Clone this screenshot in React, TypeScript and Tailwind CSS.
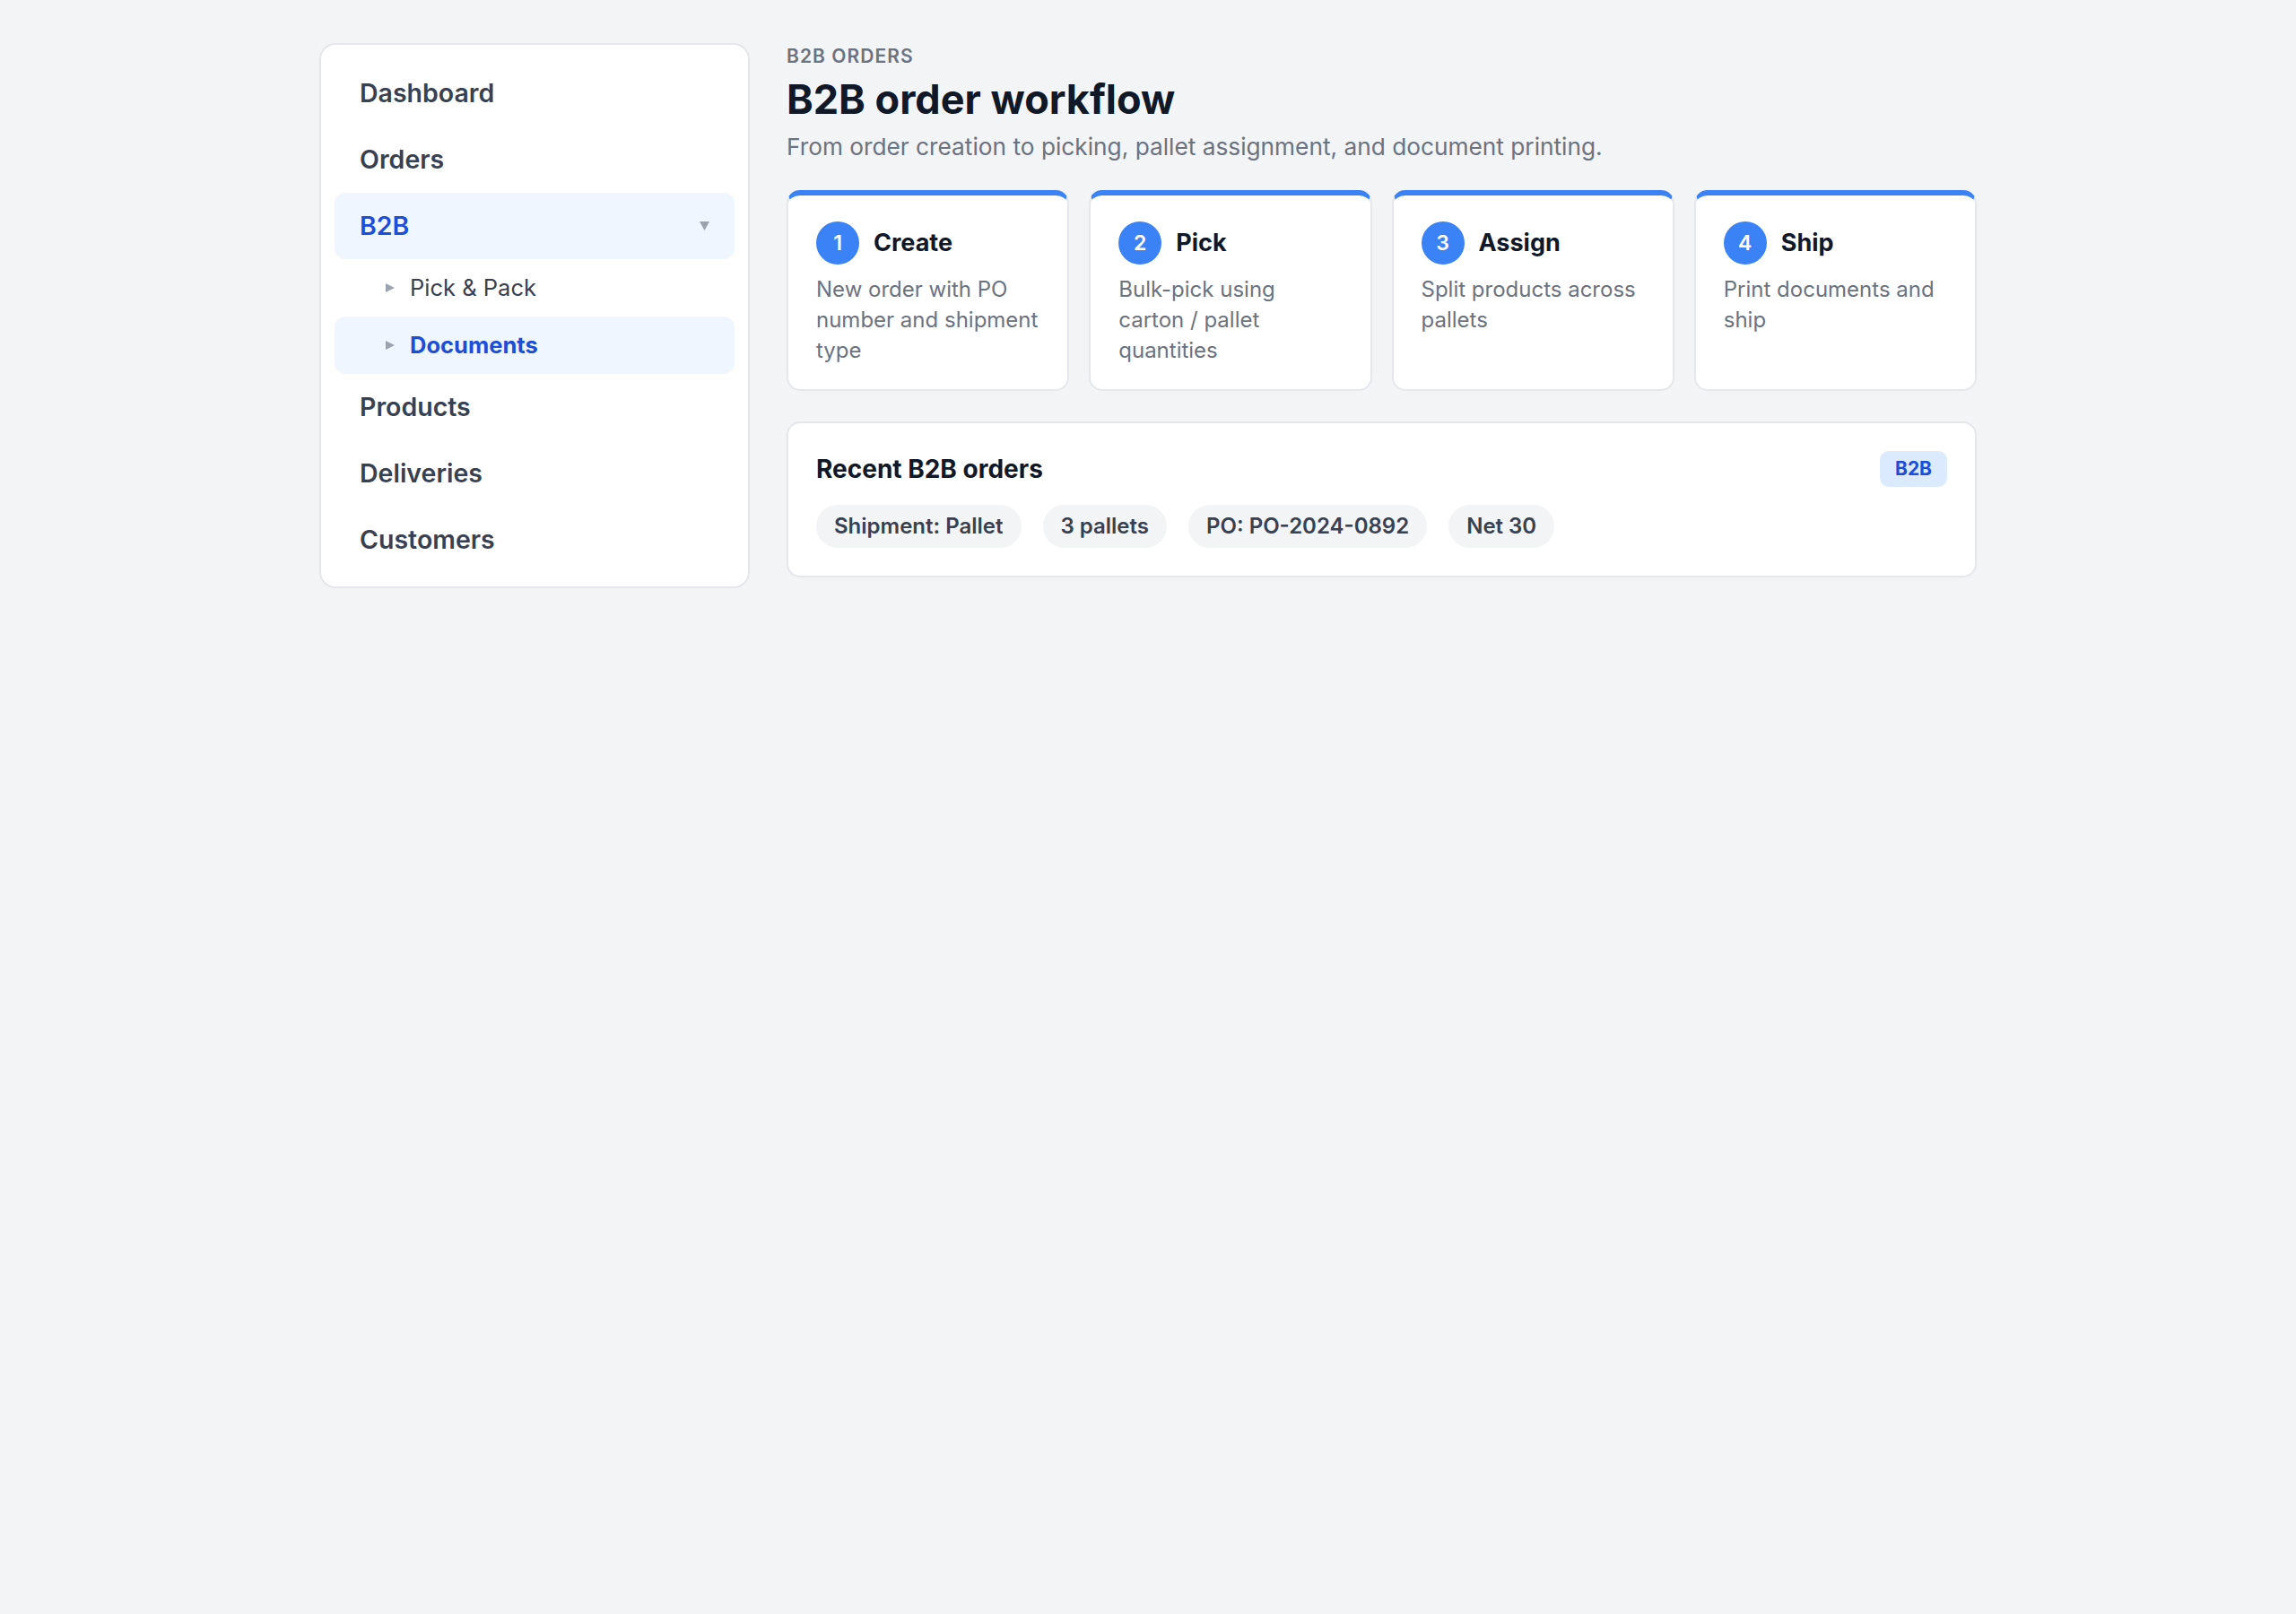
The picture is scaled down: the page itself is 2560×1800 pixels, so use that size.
import React from "react";

function Caret() {
  return (
    <svg width="11" height="10" viewBox="0 0 11 10" className="shrink-0">
      <polygon points="0,0 11,0 5.5,10" fill="#9ca3af" />
    </svg>
  );
}

function RightTri() {
  return (
    <svg width="10" height="10" viewBox="0 0 10 10" className="shrink-0">
      <polygon points="0,0 10,5 0,10" fill="#9ca3af" />
    </svg>
  );
}

function NavItem({ label }: { label: string }) {
  return (
    <div className="flex h-[74px] items-center rounded-[12px] px-[28px] text-[28.5px] font-semibold text-[#374151]">
      {label}
    </div>
  );
}

function SubItem({ label, active }: { label: string; active?: boolean }) {
  return (
    <div
      className={
        active
          ? "flex h-[64px] items-center gap-[17px] rounded-[12px] bg-[#eff6ff] pl-[57px] text-[25.5px] font-bold text-[#1d4ed8]"
          : "flex h-[64px] items-center gap-[17px] rounded-[12px] pl-[57px] text-[25.5px] font-normal text-[#374151]"
      }
    >
      <RightTri />
      <span>{label}</span>
    </div>
  );
}

const steps = [
  { n: "1", title: "Create", desc: "New order with PO number and shipment type" },
  { n: "2", title: "Pick", desc: "Bulk-pick using carton / pallet quantities" },
  { n: "3", title: "Assign", desc: "Split products across pallets" },
  { n: "4", title: "Ship", desc: "Print documents and ship" },
];

const chips = ["Shipment: Pallet", "3 pallets", "PO: PO-2024-0892", "Net 30"];

export default function App() {
  return (
    <div className="min-h-screen bg-[#f3f4f6] font-['Inter',sans-serif]">
      <div className="mx-auto flex max-w-[1920px] items-start gap-[41px] px-[36px] py-[48px]">
        <aside className="w-[480px] shrink-0 rounded-[18px] border-2 border-[#e5e7eb] bg-white px-[15px] pt-[17px] pb-[15px]">
          <nav className="flex flex-col">
            <NavItem label="Dashboard" />
            <NavItem label="Orders" />
            <div className="flex h-[74px] items-center justify-between rounded-[12px] bg-[#eff6ff] pl-[28px] pr-[28px] text-[28.5px] font-semibold text-[#1d4ed8]">
              <span>B2B</span>
              <Caret />
            </div>
            <SubItem label="Pick & Pack" />
            <SubItem label="Documents" active />
            <NavItem label="Products" />
            <NavItem label="Deliveries" />
            <NavItem label="Customers" />
          </nav>
        </aside>

        <main className="min-w-0 flex-1">
          <div className="text-[21px] leading-[30px] font-semibold uppercase tracking-wider text-[#6b7280]">
            B2B orders
          </div>
          <h1 className="mt-[6px] text-[45px] leading-[54px] font-bold text-[#111827]">
            B2B order workflow
          </h1>
          <p className="mt-[8px] text-[26.25px] leading-[36px] text-[#6b7280]">
            From order creation to picking, pallet assignment, and document printing.
          </p>

          <div className="mt-[30px] grid grid-cols-4 gap-[22px]">
            {steps.map((s) => (
              <div
                key={s.n}
                className="rounded-[15px] border-2 border-t-[6px] border-[#e5e7eb] border-t-[#3b82f6] bg-white px-[31px] pt-[29px] pb-[26px]"
              >
                <div className="flex items-center gap-[16px]">
                  <div className="flex h-[48px] w-[48px] shrink-0 items-center justify-center rounded-full bg-[#3b82f6] text-[23px] font-semibold text-white">
                    {s.n}
                  </div>
                  <div className="text-[27px] font-bold text-[#111827]">{s.title}</div>
                </div>
                <p className="mt-[11px] text-[24px] leading-[34px] text-[#6b7280]">{s.desc}</p>
              </div>
            ))}
          </div>

          <div className="mt-[34px] rounded-[15px] border-2 border-[#e5e7eb] bg-white px-[31px] pt-[31px] pb-[31px]">
            <div className="flex items-center justify-between">
              <div className="text-[28px] leading-[40px] font-bold text-[#111827]">Recent B2B orders</div>
              <span className="flex h-[40px] items-center rounded-[10px] bg-[#dbeafe] px-[17px] text-[21px] font-bold text-[#1d4ed8]">
                B2B
              </span>
            </div>
            <div className="mt-[20px] flex flex-wrap gap-[24px]">
              {chips.map((c) => (
                <span
                  key={c}
                  className="flex h-[48px] items-center rounded-full bg-[#f3f4f6] px-[20px] text-[24px] font-semibold text-[#374151]"
                >
                  {c}
                </span>
              ))}
            </div>
          </div>
        </main>
      </div>
    </div>
  );
}
